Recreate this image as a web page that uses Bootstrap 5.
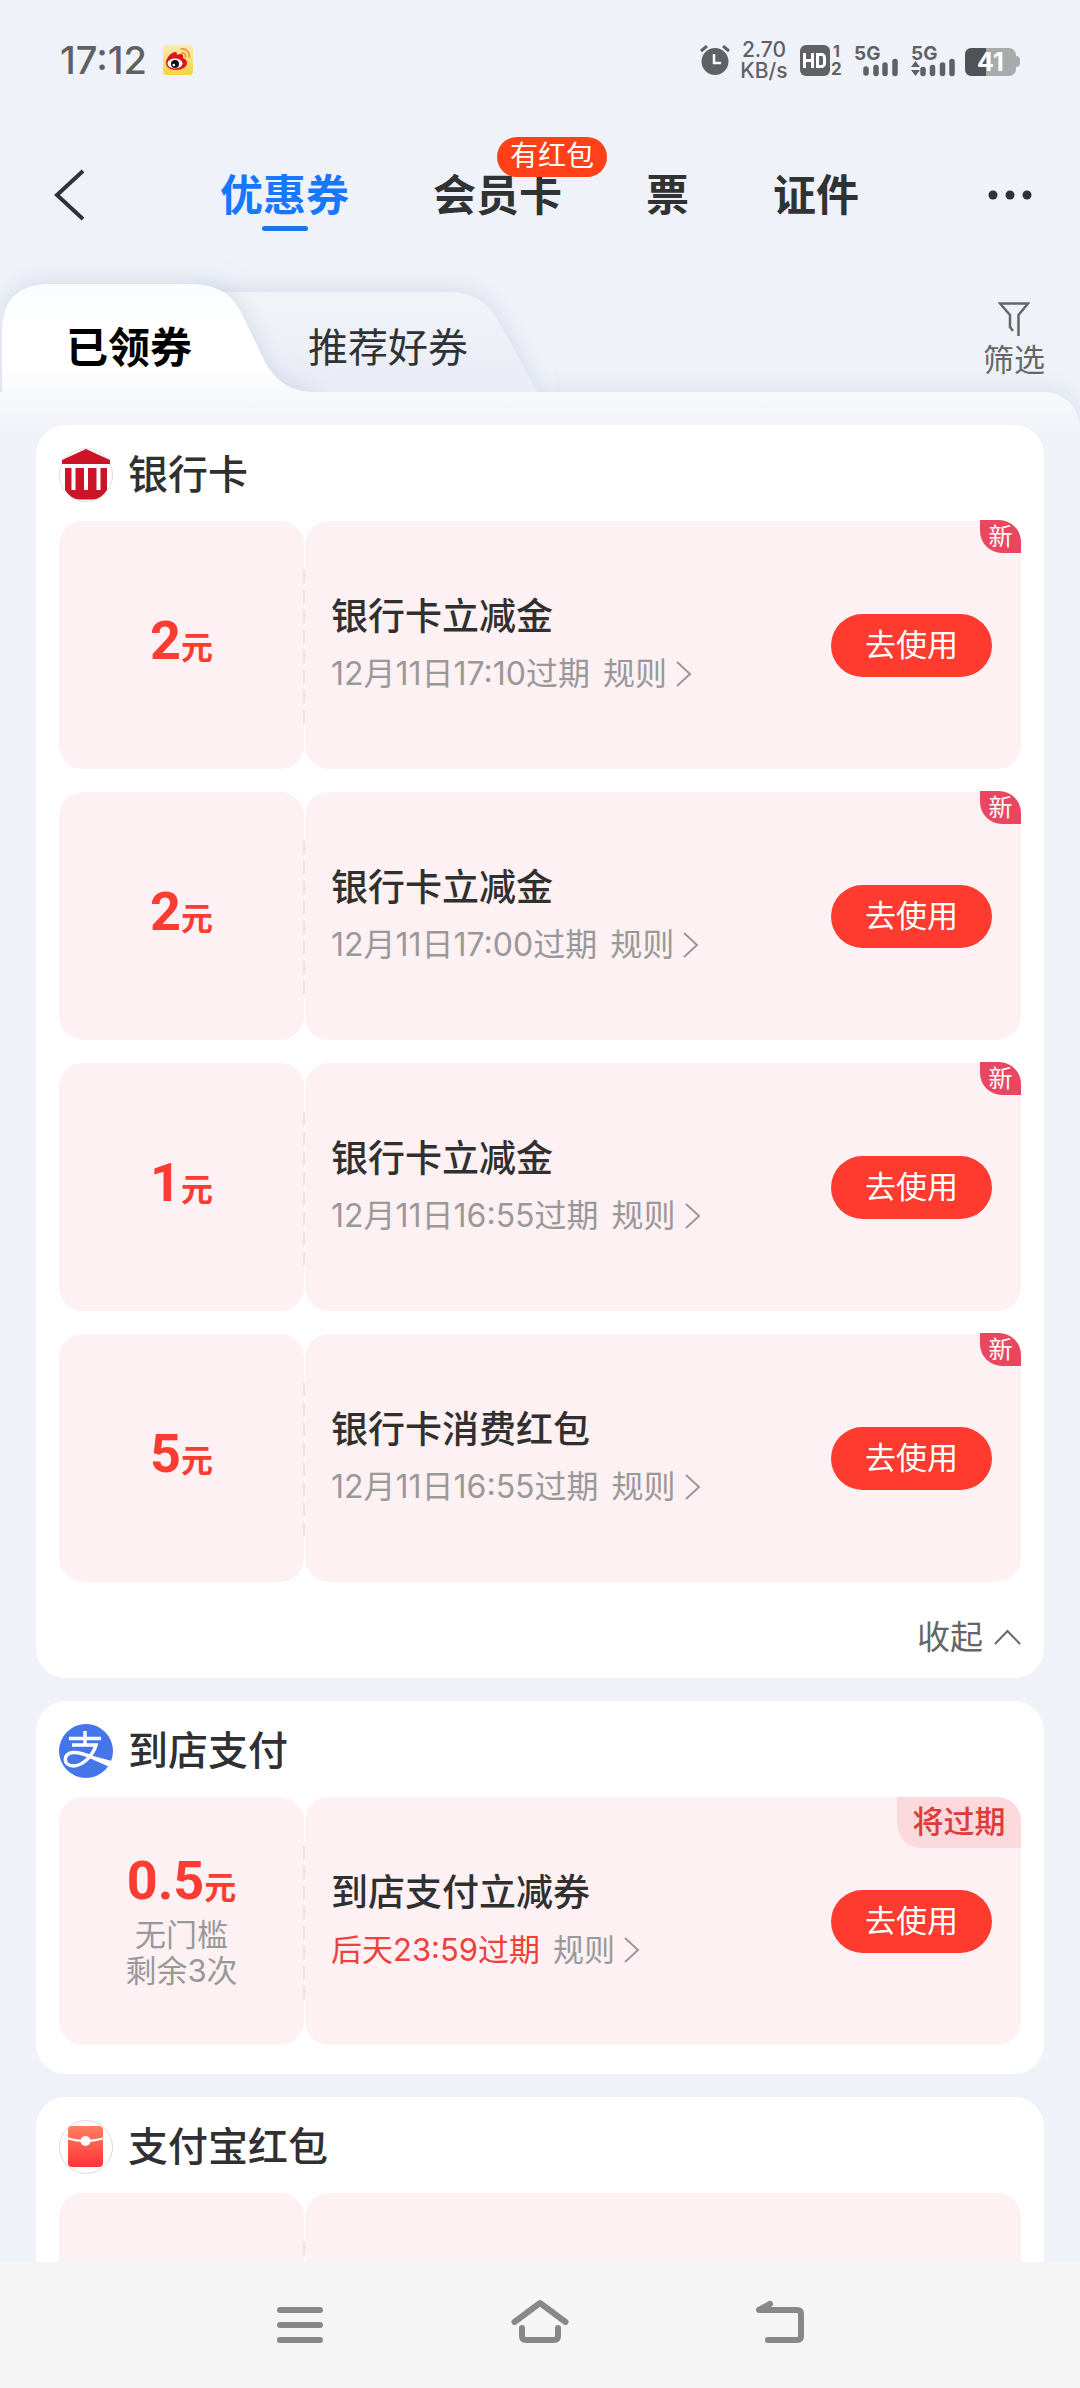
<!DOCTYPE html>
<html lang="zh-CN">
<head>
<meta charset="utf-8">
<meta name="viewport" content="width=device-width, initial-scale=1">
<title>优惠券</title>
<link href="https://cdn.jsdelivr.net/npm/bootstrap@5.3.0/dist/css/bootstrap.min.css" rel="stylesheet">
<style>
body{background:#eff2f8;font-family:Inter,"Noto Sans CJK SC",sans-serif;color:#303030}
svg{display:block;flex:none}
button{font-family:inherit}
.plain{border:0;background:none;padding:0;color:inherit}
.status{height:120px;padding:0 60px;color:#5f6164}
.clock{font-size:38px;line-height:40px;font-weight:500}
.rate{font-size:21px;line-height:21px;font-weight:500;width:48px;margin:0 12px 0 10px}
.topnav{height:136px;padding:13px 48px 0 50px}
.topnav a{font-size:43px;line-height:56px;font-weight:700;color:#303234;text-decoration:none}
.topnav a.on{color:#1677ff}
.topnav a.on::after{content:"";position:absolute;left:50%;bottom:-8px;width:46px;height:5px;margin-left:-23px;border-radius:3px;background:#1f74ee}
.tablist{gap:84px;margin-left:136px}
.bubble{left:64px;top:-30px;height:40px;border-radius:20px;padding:0 13px;background:#ff4018;color:#fff;font-size:28px;line-height:39px;font-weight:400;white-space:nowrap}
.subtabs{height:136px;padding-top:28px;z-index:1}
.shape{left:0;top:0}
.subtabs a{text-decoration:none;line-height:60px;margin-top:34px}
.mine{font-size:42px;font-weight:700;color:#000;margin-left:66px}
.hot{font-size:40px;color:#303234;margin-left:116px}
.sift{font-size:31px;line-height:36px;color:#666;margin:16px 35px 0 auto;gap:6px}
.sheet{padding:33px 36px 0;border-top-right-radius:36px;background:linear-gradient(#f8f9fc,#eff2f8 44px);box-shadow:0 -4px 20px rgba(200,208,228,.45);gap:23px}
.group{background:#fff;border-radius:30px;padding:0 23px 29px 23px}
.group.folding{padding-bottom:0}
.ghead{height:96px;gap:15px;font-size:40px;line-height:60px;font-weight:500}
.ghead h2{font:inherit;margin:0}
.stack{gap:23px}
.coupon{height:248px}
.half{background:#fef1f3;border-radius:24px}
.worth{width:245px;padding-bottom:8px;color:#fb3c32}
.detail{margin-left:1px;padding:0 29px 0 26px}
.detail::before{content:"";position:absolute;left:-2px;top:49px;width:2px;height:156px;background:repeating-linear-gradient(#f7dde1 0 13px,transparent 13px 20px)}
.sum{font:700 54px/72px Roboto,sans-serif}
.sum small{font:700 32px/40px "Noto Sans CJK SC",sans-serif}
.cond{font-size:31px;line-height:36px;color:#999;text-align:center}
.cname{font-size:37px;line-height:57px;font-weight:500;margin:0}
.due{font-size:32px;line-height:57px;color:#999}
.due a{color:#999;text-decoration:none;gap:9px;margin-left:13px}
.due.late{font-size:31px}
.late span{color:#f0403a}
.use{width:161px;height:63px;border-radius:32px;background:#ff3a2f;color:#fff;font-size:31px;line-height:60px;border:0;padding:0}
.fresh{right:0;top:-1px;width:41px;height:33px;border-radius:0 22px 0 22px;background:#e94760;color:#fff;font-size:24px;line-height:33px;text-align:center}
.soon{right:0;top:0;width:124px;height:51px;border-radius:0 24px 0 24px;background:#fbd9dc;color:#dd3c3a;font-size:31px;line-height:50px;font-weight:500;text-align:center}
.fold{height:96px;font-size:33px;line-height:50px;color:#666}
.fold button{gap:11px;margin-top:14px}
.sysbar{height:126px;background:#f5f5f5;gap:180px}
</style>
<script src="https://cdn.jsdelivr.net/npm/bootstrap@5.3.0/dist/js/bootstrap.bundle.min.js"></script>
</head>
<body>
<div class="vh-100 d-flex flex-column overflow-hidden">

<header class="flex-shrink-0">
  <div class="status d-flex align-items-center">
    <span class="clock">17:12</span>
    <svg class="ms-3" width="30" height="30" viewBox="0 0 30 30"><defs><linearGradient id="wb" x2="0" y2="1"><stop stop-color="#fbe9b8"/><stop offset="1" stop-color="#fbd23c"/></linearGradient></defs><rect width="30" height="30" rx="4" fill="url(#wb)"/><path d="M3 18c0-6 6-11 9-11 2 0 2 1 2 3 4-2 7-1 6 3 3 1 4 3 4 5 0 4-5 7-11 7S3 22 3 18z" fill="#e0141c"/><ellipse cx="12" cy="18.500" rx="7.500" ry="5" fill="#fff"/><circle cx="12" cy="19" r="4" fill="#111"/><circle cx="10.800" cy="20" r="1.300" fill="#fff"/><path d="M18 4c5-1 9 3 8 8M19 8c2-.5 4 1 3.500 4" fill="none" stroke="#f0962a" stroke-width="1.600" stroke-linecap="round"/></svg>
    <div class="ms-auto d-flex align-items-center">
      <svg width="30" height="30" viewBox="0 0 30 30"><circle cx="15" cy="16.500" r="13.500" fill="#5f6164"/><path d="M1 6l6-5M29 6l-6-5" stroke="#5f6164" stroke-width="3"/><path d="M14 9v9h7" fill="none" stroke="#fff" stroke-width="2.500"/></svg>
      <div class="rate text-center">2.70<br>KB/s</div>
      <svg width="220" height="36" viewBox="0 0 220 36" fill="#5f6164" font-family="Inter,sans-serif" font-weight="700"><rect y="3" width="30" height="31" rx="6"/><path d="M4.500 11v15M12.500 11v15M4.500 18.500h8M17.500 12.500v12h5q2-1 2-3v-6q0-2-2-3z" fill="none" stroke="#fff" stroke-width="3"/><text x="33" y="15" font-size="16">1</text><text x="31" y="33" font-size="17">2</text>
      <text x="54" y="18" font-size="19">5G</text><path d="M66 27v4M76 25.500v6M85 23v8.500M95 19.500v12" stroke="#5f6164" stroke-width="5.500" stroke-linecap="round"/>
      <text x="111" y="18" font-size="19">5G</text><path d="M111 25l4.500-6 4.500 6zM111 28l4.500 6 4.500-6z"/><path d="M123 27.500v4M132.500 25.500v6M142.500 23v8.500M152 19.500v12" stroke="#5f6164" stroke-width="5.500" stroke-linecap="round"/>
      <rect x="165" y="6" width="51" height="28" rx="7" fill="#a9aaac"/><path d="M216 14h1q3 1 3 3v5q0 2-3 3h-1z" fill="#a9aaac"/><path d="M172 6h14v28h-14q-7 0-7-7V13q0-7 7-7z" fill="#505255"/><text x="177" y="29" font-size="25" fill="#fff">41</text></svg>
    </div>
  </div>
  <nav class="topnav d-flex align-items-center" aria-label="卡包">
    <button class="plain" type="button" aria-label="返回"><svg width="34" height="52" viewBox="0 0 34 52"><path d="M33 2L7 26l26 24" fill="none" stroke="#303234" stroke-width="4"/></svg></button>
    <div class="tablist d-flex">
      <a class="on position-relative" href="#">优惠券</a>
      <a class="position-relative" href="#">会员卡<span class="bubble position-absolute">有红包</span></a>
      <a href="#">票</a>
      <a href="#">证件</a>
    </div>
    <button class="plain ms-auto" type="button" aria-label="更多"><svg width="48" height="20" viewBox="0 0 48 20" fill="#303234"><circle cx="9" cy="10" r="4.500"/><circle cx="26" cy="10" r="4.500"/><circle cx="43" cy="10" r="4.500"/></svg></button>
  </nav>
</header>

<div class="subtabs flex-shrink-0 position-relative d-flex align-items-start">
  <svg class="shape position-absolute" width="600" height="136" viewBox="0 0 600 136">
    <defs>
      <linearGradient id="front" gradientUnits="userSpaceOnUse" x1="0" y1="28" x2="0" y2="136"><stop stop-color="#fafcff"/><stop offset=".4" stop-color="#fff"/><stop offset=".75" stop-color="#fff"/><stop offset="1" stop-color="#f8f9fc"/></linearGradient>
      <linearGradient id="rear" x2="0" y2="1"><stop stop-color="#f1f4f8"/><stop offset="1" stop-color="#e9ecf5"/></linearGradient>
      <filter id="soft" x="-20%" y="-40%" width="140%" height="180%"><feDropShadow dx="0" dy="-2" stdDeviation="11" flood-color="#bcc6de" flood-opacity=".55"/></filter>
    </defs>
    <path filter="url(#soft)" fill="url(#rear)" d="M200 36H450Q484 36 500 68Q520 104 538 136H200z"/>
    <path filter="url(#soft)" fill="url(#front)" d="M2 160V76Q2 28 50 28H192Q228 28 242 58L264 104Q280 136 314 136V160z"/>
  </svg>
  <a class="mine position-relative" href="#">已领券</a>
  <a class="hot position-relative" href="#">推荐好券</a>
  <button class="sift plain position-relative d-flex flex-column align-items-center" type="button"><svg width="32" height="36" viewBox="0 0 32 36"><path d="M20.500 36V15L30 3.500H2L12 15V27l3 4" fill="none" stroke="#666" stroke-width="2.500"/></svg>筛选</button>
</div>

<main class="sheet flex-grow-1 overflow-hidden d-flex flex-column">
  <section class="group folding">
    <div class="ghead d-flex align-items-center pt-1"><svg width="54" height="54" viewBox="0 0 54 54"><circle cx="27" cy="27" r="26.500" fill="#fff" stroke="#ddd"/><path d="M27 1L51 12V16H3V12zM6 20H48V42Q42 51 34 51.500H20Q12 51 6 42z" fill="#cc1428"/><path d="M14.500 20v22M27 20v22M39.500 20v22" stroke="#fff" stroke-width="4"/></svg><h2>银行卡</h2></div>
    <div class="stack d-flex flex-column">
      <article class="coupon d-flex"><div class="worth half d-flex flex-column align-items-center justify-content-center"><div class="sum">2<small>元</small></div></div><div class="detail half flex-grow-1 position-relative d-flex align-items-center justify-content-between"><div><h3 class="cname">银行卡立减金</h3><div class="due d-flex">12月11日17:10过期<a class="d-flex align-items-center" href="#">规则<svg width="16" height="26" viewBox="0 0 16 26"><path d="M1 1l13 12L1 25" fill="none" stroke="#999" stroke-width="2"/></svg></a></div></div><button class="use" type="button">去使用</button><span class="fresh position-absolute">新</span></div></article>
      <article class="coupon d-flex"><div class="worth half d-flex flex-column align-items-center justify-content-center"><div class="sum">2<small>元</small></div></div><div class="detail half flex-grow-1 position-relative d-flex align-items-center justify-content-between"><div><h3 class="cname">银行卡立减金</h3><div class="due d-flex">12月11日17:00过期<a class="d-flex align-items-center" href="#">规则<svg width="16" height="26" viewBox="0 0 16 26"><path d="M1 1l13 12L1 25" fill="none" stroke="#999" stroke-width="2"/></svg></a></div></div><button class="use" type="button">去使用</button><span class="fresh position-absolute">新</span></div></article>
      <article class="coupon d-flex"><div class="worth half d-flex flex-column align-items-center justify-content-center"><div class="sum">1<small>元</small></div></div><div class="detail half flex-grow-1 position-relative d-flex align-items-center justify-content-between"><div><h3 class="cname">银行卡立减金</h3><div class="due d-flex">12月11日16:55过期<a class="d-flex align-items-center" href="#">规则<svg width="16" height="26" viewBox="0 0 16 26"><path d="M1 1l13 12L1 25" fill="none" stroke="#999" stroke-width="2"/></svg></a></div></div><button class="use" type="button">去使用</button><span class="fresh position-absolute">新</span></div></article>
      <article class="coupon d-flex"><div class="worth half d-flex flex-column align-items-center justify-content-center"><div class="sum">5<small>元</small></div></div><div class="detail half flex-grow-1 position-relative d-flex align-items-center justify-content-between"><div><h3 class="cname">银行卡消费红包</h3><div class="due d-flex">12月11日16:55过期<a class="d-flex align-items-center" href="#">规则<svg width="16" height="26" viewBox="0 0 16 26"><path d="M1 1l13 12L1 25" fill="none" stroke="#999" stroke-width="2"/></svg></a></div></div><button class="use" type="button">去使用</button><span class="fresh position-absolute">新</span></div></article>
    </div>
    <div class="fold d-flex align-items-center justify-content-end"><button class="plain d-flex align-items-center" type="button">收起<svg width="27" height="16" viewBox="0 0 27 16"><path d="M1 15L13.500 2 26 15" fill="none" stroke="#666" stroke-width="2"/></svg></button></div>
  </section>

  <section class="group">
    <div class="ghead d-flex align-items-center pt-1"><svg width="54" height="54" viewBox="0 0 54 54"><circle cx="27" cy="27" r="27" fill="#4476ea"/><path d="M10 14.500H42M26 7V21M13 21H37C34 31 25 41 15 42C3 42 4 29 14 28.500C23 28 32 33 40 36" fill="none" stroke="#fff" stroke-width="3.500"/><path d="M36 32.500L53 37Q53 41 50.500 43L35 36z" fill="#fff"/></svg><h2>到店支付</h2></div>
    <article class="coupon d-flex"><div class="worth half d-flex flex-column align-items-center justify-content-center"><div class="sum">0.5<small>元</small></div><div class="cond">无门槛<br>剩余3次</div></div><div class="detail half flex-grow-1 position-relative d-flex align-items-center justify-content-between"><div><h3 class="cname">到店支付立减券</h3><div class="due late d-flex"><span>后天23:59过期</span><a class="d-flex align-items-center" href="#">规则<svg width="16" height="26" viewBox="0 0 16 26"><path d="M1 1l13 12L1 25" fill="none" stroke="#999" stroke-width="2"/></svg></a></div></div><button class="use" type="button">去使用</button><span class="soon position-absolute">将过期</span></div></article>
  </section>

  <section class="group">
    <div class="ghead d-flex align-items-center pt-1"><svg width="54" height="54" viewBox="0 0 54 54"><defs><linearGradient id="env" x2="0" y2="1"><stop stop-color="#ff7f63"/><stop offset="1" stop-color="#ff3338"/></linearGradient></defs><circle cx="27" cy="27" r="26.500" fill="#fff" stroke="#d8dcdc"/><rect x="9" y="6" width="35" height="41" rx="4" fill="url(#env)"/><path d="M9 18.500q17 5 35 0" fill="none" stroke="#fff" stroke-width="2"/><circle cx="26.500" cy="21" r="5" fill="#fff"/></svg><h2>支付宝红包</h2></div>
    <article class="coupon d-flex"><div class="worth half"></div><div class="detail half flex-grow-1 position-relative"></div></article>
  </section>
</main>

<nav class="sysbar flex-shrink-0 d-flex align-items-center justify-content-center" aria-label="系统导航">
  <button class="plain" type="button" aria-label="最近任务"><svg width="60" height="60" viewBox="0 0 60 60"><path d="M10 15h40M10 30h40M10 45h40" stroke="#888" stroke-width="6" stroke-linecap="round"/></svg></button>
  <button class="plain" type="button" aria-label="主屏幕"><svg width="60" height="60" viewBox="0 0 60 60"><path d="M4.500 27L30 8l25.500 19M12 33v8q0 4 4 4h28q4 0 4-4v-8" fill="none" stroke="#888" stroke-width="6" stroke-linecap="round" stroke-linejoin="round"/></svg></button>
  <button class="plain" type="button" aria-label="返回"><svg width="60" height="60" viewBox="0 0 60 60"><path d="M20 9L9 15H47q4 0 4 4V41q0 4-4 4H18" fill="none" stroke="#888" stroke-width="6" stroke-linecap="round" stroke-linejoin="round"/></svg></button>
</nav>
</div>
</body>
</html>
